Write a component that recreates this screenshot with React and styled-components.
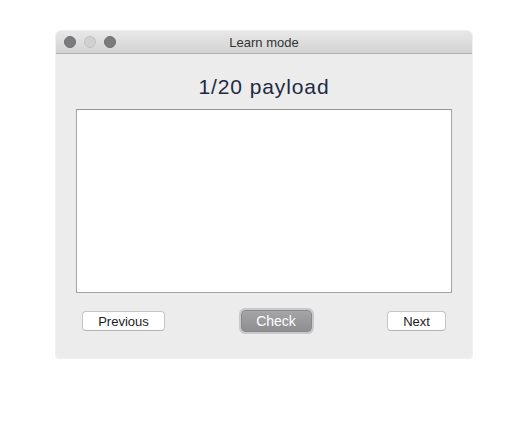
import styled, { createGlobalStyle } from "styled-components"

const Global = createGlobalStyle`
  html, body { margin: 0; padding: 0; background: #fff; }
  body { font-family: "Liberation Sans", Arial, sans-serif; }
`

const Page = styled.div`
  width: 528px;
  height: 439px;
  padding: 31px 0 0 56px;
  box-sizing: border-box;
`

const Window = styled.div`
  width: 416px;
  height: 327px;
  background: #ececec;
  border-radius: 5px 5px 3px 3px;
  box-shadow: 0 0 0 1px rgba(0,0,0,0.06);
  display: flex;
  flex-direction: column;
  overflow: hidden;
`

const TitleBar = styled.div`
  height: 22px;
  flex: none;
  background: linear-gradient(#e8e8e8, #d3d3d3);
  border-bottom: 1px solid #b1b1b1;
  display: flex;
  align-items: center;
  position: relative;
  padding-left: 8px;
  gap: 8px;
`

const Light = styled.span`
  width: 12px;
  height: 12px;
  border-radius: 50%;
  background: ${p => (p.$off ? "#d0d0d0" : "#7b7b7d")};
  border: 1px solid ${p => (p.$off ? "#c2c2c2" : "#6e6e70")};
  box-sizing: border-box;
`

const Title = styled.div`
  position: absolute;
  left: 0;
  right: 0;
  text-align: center;
  font-size: 13px;
  color: #333;
  pointer-events: none;
`

const Body = styled.div`
  flex: 1;
  display: flex;
  flex-direction: column;
  padding: 0 20px 0 20px;
`

const Heading = styled.div`
  text-align: center;
  font-size: 21px;
  color: #1e2a44;
  margin-top: 22px;
  height: 33px;
  line-height: 22px;
  letter-spacing: 0.9px;
`

const Editor = styled.textarea`
  width: 376px;
  height: 184px;
  box-sizing: border-box;
  border: 1px solid #a4a4a4;
  border-top-color: #959595;
  background: #fff;
  resize: none;
  outline: none;
  margin: 0;
  font-family: inherit;
`

const Actions = styled.div`
  display: flex;
  justify-content: space-between;
  align-items: center;
  margin-top: 17px;
  padding: 0 6px 0 6px;
`

const Button = styled.button`
  height: 20px;
  width: ${p => p.$w}px;
  font-family: inherit;
  font-size: 13px;
  color: #222;
  background: #fff;
  border: 1px solid #c5c5c5;
  border-bottom-color: #b3b3b3;
  border-radius: 4px;
  padding: 0;
  box-sizing: border-box;
`

const PrimaryButton = styled(Button)`
  height: 22px;
  color: #fff;
  font-size: 14px;
  background: linear-gradient(#a5a5a7, #8e8e90);
  border: 1px solid #8a8a8c;
  box-shadow: 0 0 0 2px #c9c9cb;
`

export default function App() {
  return (
    <>
      <Global />
      <Page>
        <Window>
          <TitleBar>
            <Light />
            <Light $off />
            <Light />
            <Title>Learn mode</Title>
          </TitleBar>
          <Body>
            <Heading>1/20 payload</Heading>
            <Editor />
            <Actions>
              <Button $w={83}>Previous</Button>
              <PrimaryButton $w={71}>Check</PrimaryButton>
              <Button $w={59}>Next</Button>
            </Actions>
          </Body>
        </Window>
      </Page>
    </>
  )
}
